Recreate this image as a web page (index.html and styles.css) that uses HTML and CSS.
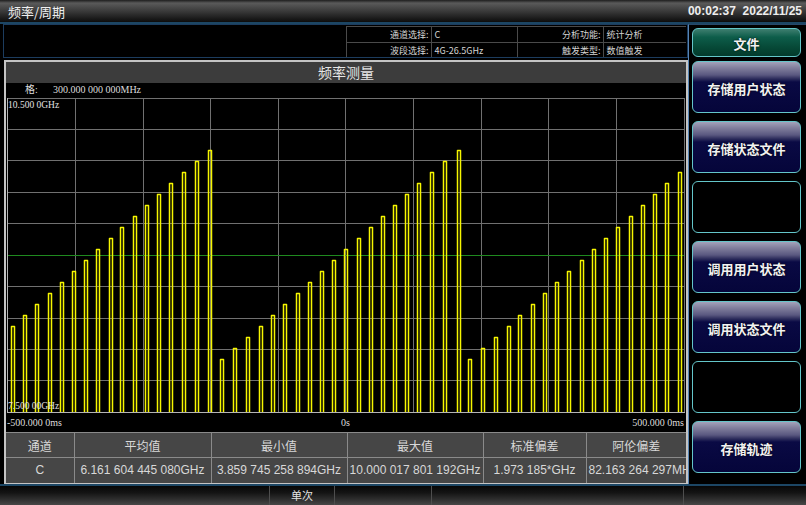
FILE: index.html
```html
<!DOCTYPE html>
<html lang="zh-CN">
<head>
<meta charset="utf-8">
<title>频率/周期</title>
<link rel="stylesheet" href="styles.css">
</head>
<body>
<div class="screen">
  <header class="titlebar">
    <span class="title">频率/周期</span>
    <span class="clock">00:02:37  2022/11/25</span>
  </header>
  <div class="main">
    <div class="left">
      <div class="info">
        <table class="info-table">
          <colgroup><col class="c1"><col class="c2"><col class="c3"><col class="c4"></colgroup>
          <tr class="r1"><td class="lbl">通道选择:</td><td class="val">C</td><td class="lbl">分析功能:</td><td class="val">统计分析</td></tr>
          <tr class="r2"><td class="lbl">波段选择:</td><td class="val">4G-26.5GHz</td><td class="lbl">触发类型:</td><td class="val">数值触发</td></tr>
        </table>
      </div>
      <section class="panel">
        <div class="panel-title">频率测量</div>
        <div class="scale"><span class="scale-key">格:</span><span class="scale-val">300.000 000 000MHz</span></div>
        <div class="chart">
          <svg class="plot" width="680" height="316" viewBox="6 97 680 316" xmlns="http://www.w3.org/2000/svg">
            <path d="M75.5 98V412M143.5 98V412M210.5 98V412M278.5 98V412M345.5 98V412M413.5 98V412M481.5 98V412M548.5 98V412M616.5 98V412M7 129.5H684M7 160.5H684M7 192.5H684M7 223.5H684M7 286.5H684M7 318.5H684M7 349.5H684M7 380.5H684M7 98.5H684.5M684.5 98V412" stroke="#707070" stroke-width="1" fill="none"/>
            <path d="M8 255.5H684" stroke="#1f8a1f" stroke-width="1" fill="none"/>
            <path d="M7.5 98V413M7 412.5H685" stroke="#b4b4b4" stroke-width="1" fill="none"/>
            <path fill="none" stroke="#f6f600" stroke-width="1.5" stroke-linejoin="round" d="M11.5 412V326.5h3V412M23.5 412V315.5h3V412M35.5 412V304.5h3V412M48.5 412V293.5h3V412M60.5 412V282.5h3V412M72.5 412V271.5h3V412M84.5 412V260.5h3V412M96.5 412V249.5h3V412M109.5 412V238.5h3V412M120.5 412V227.5h3V412M133.5 412V216.5h3V412M145.5 412V205.5h3V412M157.5 412V194.5h3V412M169.5 412V183.5h3V412M182.5 412V172.5h3V412M195.5 412V161.5h3V412M208.5 412V150.5h3V412M220.5 412V359.5h3V412M233.5 412V348.5h3V412M246.5 412V337.5h3V412M259.5 412V326.5h3V412M271.5 412V315.5h3V412M283.5 412V304.5h3V412M296.5 412V293.5h3V412M308.5 412V282.5h3V412M320.5 412V271.5h3V412M332.5 412V260.5h3V412M344.5 412V249.5h3V412M357.5 412V238.5h3V412M369.5 412V227.5h3V412M381.5 412V216.5h3V412M393.5 412V205.5h3V412M405.5 412V194.5h3V412M417.5 412V183.5h3V412M430.5 412V172.5h3V412M443.5 412V161.5h3V412M457.5 412V150.5h3V412M468.5 412V359.5h3V412M481.5 412V348.5h3V412M494.5 412V337.5h3V412M507.5 412V326.5h3V412M518.5 412V315.5h3V412M531.5 412V304.5h3V412M543.5 412V293.5h3V412M555.5 412V282.5h3V412M567.5 412V271.5h3V412M580.5 412V260.5h3V412M592.5 412V249.5h3V412M604.5 412V238.5h3V412M616.5 412V227.5h3V412M629.5 412V216.5h3V412M641.5 412V205.5h3V412M653.5 412V194.5h3V412M665.5 412V183.5h3V412M678.5 412V172.5h3V412"/>
          </svg>
          <span class="ylabel ylabel-top">10.500 0GHz</span>
          <span class="ylabel ylabel-bottom">7.500 00GHz</span>
        </div>
        <div class="axis">
          <span class="ax-left">-500.000 0ms</span>
          <span class="ax-mid">0s</span>
          <span class="ax-right">500.000 0ms</span>
        </div>
        <table class="stats">
          <colgroup><col class="s1"><col class="s2"><col class="s3"><col class="s4"><col class="s5"><col class="s6"></colgroup>
          <tr class="stats-head"><td>通道</td><td>平均值</td><td>最小值</td><td>最大值</td><td>标准偏差</td><td>阿伦偏差</td></tr>
          <tr class="stats-data"><td>C</td><td>6.161 604 445 080GHz</td><td>3.859 745 258 894GHz</td><td>10.000 017 801 192GHz</td><td>1.973 185*GHz</td><td>82.163 264 297MHz</td></tr>
        </table>
      </section>
    </div>
    <aside class="softkeys">
      <div class="key key-file">文件</div>
      <div class="key key-blue">存储用户状态</div>
      <div class="key key-blue">存储状态文件</div>
      <div class="key key-empty"></div>
      <div class="key key-blue">调用用户状态</div>
      <div class="key key-blue">调用状态文件</div>
      <div class="key key-empty"></div>
      <div class="key key-blue">存储轨迹</div>
    </aside>
  </div>
  <footer class="statusbar">
    <div class="seg seg1"></div>
    <div class="seg seg2">单次</div>
    <div class="seg seg3"></div>
    <div class="seg seg4"></div>
    <div class="seg seg5"></div>
  </footer>
</div>
</body>
</html>
```
FILE: styles.css
```css
* { box-sizing: border-box; }
html, body { margin: 0; padding: 0; background: #000; }
body { font-family: "Liberation Sans", "Noto Sans CJK SC", sans-serif; }

.screen {
  width: 806px;
  height: 505px;
  overflow: hidden;
  display: flex;
  flex-direction: column;
  background: #000;
}

/* title bar */
.titlebar {
  height: 24px;
  flex: none;
  border-bottom: 2px solid #1c4664;
  background: linear-gradient(#1e1e1e 0, #5a5a5a 14%, #363636 55%, #0c0c0c 100%);
  display: flex;
  justify-content: space-between;
  align-items: center;
  padding: 0 4px 0 8px;
  color: #eeeeee;
}
.title {
  font-family: "Noto Sans CJK SC", sans-serif;
  font-size: 13px;
  line-height: 1;
}
.clock {
  font-family: "Liberation Sans", sans-serif;
  font-size: 12px;
  font-weight: bold;
  white-space: pre;
  line-height: 1;
}

/* main */
.main {
  height: 462px;
  flex: none;
  display: flex;
  border-bottom: 2px solid #1c4664;
}
.left {
  width: 688px;
  display: flex;
  flex-direction: column;
}

/* info strip */
.info {
  margin-left: 3px;
  height: 34px;
  border: 1px solid #1c3c5e;
  display: flex;
  justify-content: flex-end;
  padding: 1px 1px 0 0;
}
.info-table {
  border-collapse: collapse;
  table-layout: fixed;
  width: 340px;
  font-family: "Noto Sans CJK SC", sans-serif;
  font-size: 9px;
  color: #d4d4d4;
}
.info-table .c1 { width: 85px; }
.info-table .c2 { width: 86px; }
.info-table .c3 { width: 86px; }
.info-table .c4 { width: 83px; }
.info-table td {
  border: 1px solid #4a4a4a;
  padding: 0 3px;
  line-height: 13px;
  white-space: nowrap;
}
.info-table tr.r1 td { height: 16px; }
.info-table tr.r2 td { height: 14px; border-bottom: none; }
.info-table td:last-child { border-right: none; }
.info-table .lbl { text-align: right; padding-right: 2px; }
.info-table .val { text-align: left; }

/* measurement panel */
.panel {
  margin: 2px 0 0 4px;
  width: 684px;
  height: 424px;
  border: 2px solid #c4c4c4;
  display: flex;
  flex-direction: column;
  background: #000;
}
.panel-title {
  height: 21px;
  flex: none;
  background: #3c3c3c;
  color: #e6e6e6;
  font-family: "Noto Sans CJK SC", sans-serif;
  font-size: 14px;
  line-height: 21px;
  text-align: center;
}
.scale {
  height: 14px;
  flex: none;
  display: flex;
  font-family: "Liberation Serif", serif;
  font-size: 10px;
  line-height: 14px;
  color: #dcdcdc;
}
.scale-key { padding-left: 19px; width: 47px; }

.chart {
  height: 316px;
  flex: none;
  position: relative;
}
.plot { display: block; }
.ylabel {
  position: absolute;
  left: 2px;
  font-family: "Liberation Serif", serif;
  font-size: 9.5px;
  line-height: 10px;
  color: #e2e2e2;
}
.ylabel-top { top: 3px; }
.ylabel-bottom { top: 304px; }

.axis {
  height: 19px;
  flex: none;
  display: grid;
  grid-template-columns: 1fr auto 1fr;
  align-items: center;
  padding: 0 2px 0 1px;
  font-family: "Liberation Serif", serif;
  font-size: 10px;
  color: #dcdcdc;
}
.ax-left { justify-self: start; }
.ax-mid { justify-self: center; }
.ax-right { justify-self: end; }

.stats {
  width: 680px;
  border-collapse: collapse;
  table-layout: fixed;
  background: #464646;
  color: #d8d8d8;
  font-size: 12px;
  border-top: 1px solid #c0c0c0;
}
.stats .s1 { width: 68px; }
.stats .s2 { width: 137px; }
.stats .s3 { width: 136px; }
.stats .s4 { width: 136px; }
.stats .s5 { width: 103px; }
.stats .s6 { width: 100px; }
.stats td {
  height: 25px;
  border: 1px solid #8a8a8a;
  text-align: center;
  white-space: nowrap;
  overflow: hidden;
  padding: 0 2px;
}
.stats td:first-child { border-left: none; }
.stats td:last-child { border-right: none; }
.stats tr.stats-data td { border-bottom: none; }
.stats-head td { font-family: "Noto Sans CJK SC", sans-serif; font-size: 12px; }

/* soft keys */
.softkeys {
  width: 118px;
  border-left: 1px solid #5684b4;
  border-top: 1px solid #27486a;
  padding: 3px 0 0 3px;
  display: flex;
  flex-direction: column;
}
.key {
  width: 109px;
  height: 52px;
  flex: none;
  margin-top: 8px;
  border: 1.5px solid #64c6ca;
  border-radius: 6px;
  display: flex;
  align-items: center;
  justify-content: center;
  padding-top: 3px;
  color: #f2f2f2;
  font-family: "Noto Sans CJK SC", sans-serif;
  font-weight: bold;
  font-size: 13px;
  text-shadow: 0 0 2px #000;
}
.key-file {
  height: 29px;
  margin-top: 0;
  margin-bottom: -4px;
  padding-top: 2px;
  background: linear-gradient(#3f7f70 0%, #0d5d4a 30%, #064836 70%, #033a2c 100%);
}
.key-blue {
  background: linear-gradient(180deg, #a4a2ba 0%, #807e9c 12%, #5a5880 26%, #2a2a5a 34%, #0a0a44 40%, #05053a 100%);
}
.key-empty { background: #000; }

/* status bar */
.statusbar {
  height: 19px;
  flex: none;
  display: flex;
  background: linear-gradient(#060606 0%, #141414 35%, #2e2e2e 70%, #474747 100%);
  color: #e4e4e4;
  font-family: "Noto Sans CJK SC", sans-serif;
  font-size: 11px;
}
.seg {
  border-right: 1px solid #4e4e4e;
  display: flex;
  align-items: center;
  justify-content: center;
  line-height: 1;
}
.seg1 { width: 270px; }
.seg2 { width: 65px; }
.seg3 { width: 97px; }
.seg4 { width: 252px; }
.seg5 { flex: 1; border-right: none; }
```
